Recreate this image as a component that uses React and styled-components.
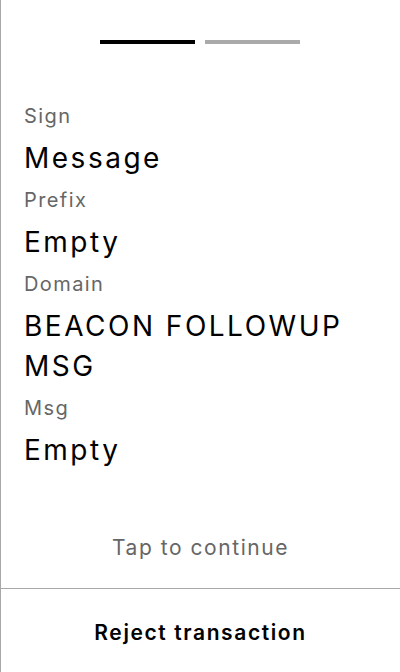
import React from "react";
import styled, { createGlobalStyle } from "styled-components";

const Global = createGlobalStyle`
  html, body { margin: 0; padding: 0; background: #fff; }
  body { font-family: Inter, "Noto Sans", sans-serif; }
`;

const Screen = styled.div`
  width: 400px;
  height: 672px;
  box-sizing: border-box;
  border-left: 1px solid #a8a8a8;
  display: flex;
  flex-direction: column;
  background: #fff;
`;

const Progress = styled.div`
  display: flex;
  justify-content: center;
  gap: 10px;
  padding-top: 40px;
  padding-right: 1px;
`;

const Bar = styled.div`
  width: 95px;
  height: 4px;
  background: ${(p) => (p.$active ? "#000" : "#aaaaaa")};
`;

const Content = styled.div`
  flex: 1;
  padding: 58px 24px 0 23px;
  display: flex;
  flex-direction: column;
`;

const Label = styled.div`
  font-size: 20px;
  line-height: 28px;
  letter-spacing: 1.4px;
  color: #666;
  margin-top: ${(p) => (p.$first ? "0" : "8px")};
`;

const Value = styled.div`
  font-size: 28px;
  line-height: 40px;
  letter-spacing: 2.5px;
  color: #000;
  margin-top: 8px;
`;

const Tap = styled.div`
  text-align: center;
  font-size: 21px;
  line-height: 28px;
  letter-spacing: 1.55px;
  color: #666;
  padding-bottom: 26px;
`;

const Divider = styled.div`
  height: 1px;
  background: #a8a8a8;
`;

const Reject = styled.button`
  height: 83px;
  border: none;
  background: transparent;
  font-family: Inter, "Noto Sans", sans-serif;
  font-size: 21px;
  font-weight: 600;
  letter-spacing: 1.6px;
  color: #000;
  padding: 3px 0 0;
  cursor: pointer;
`;

const fields = [
  ["Sign", "Message"],
  ["Prefix", "Empty"],
  ["Domain", "BEACON FOLLOWUP MSG"],
  ["Msg", "Empty"],
];

export default function App() {
  return (
    <>
      <Global />
      <Screen>
        <Progress>
          <Bar $active />
          <Bar />
        </Progress>
        <Content>
          {fields.map(([l, v], i) => (
            <React.Fragment key={l}>
              <Label $first={i === 0}>{l}</Label>
              <Value>{v}</Value>
            </React.Fragment>
          ))}
        </Content>
        <Tap>Tap to continue</Tap>
        <Divider />
        <Reject>Reject transaction</Reject>
      </Screen>
    </>
  );
}
